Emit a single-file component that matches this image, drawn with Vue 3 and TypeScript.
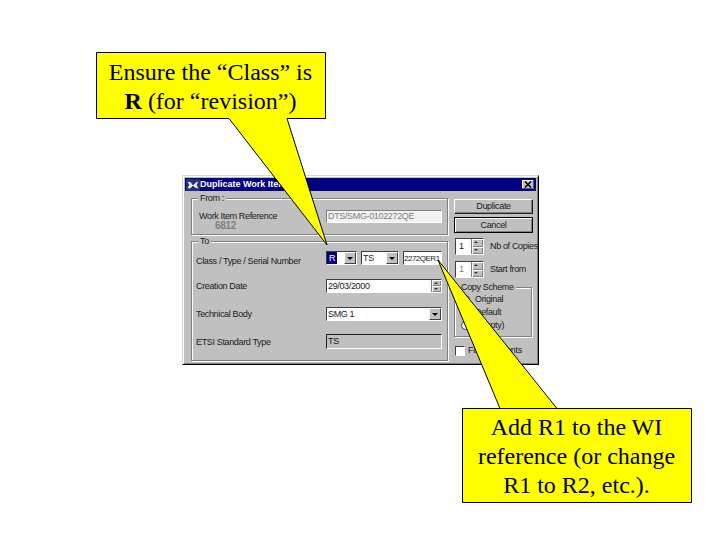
<script setup lang="ts">
const rows = [
  { label: 'Creation Date', kind: 'date', value: '29/03/2000' },
  { label: 'Technical Body', kind: 'combo', value: 'SMG 1' },
  { label: 'ETSI  Standard Type', kind: 'readonly', value: 'TS' },
]
const schemes = ['Original', 'Default', '(Empty)']
</script>

<template>
  <div class="slide">
    <section class="dialog">
      <header class="titlebar">
        <svg class="app-icon" viewBox="0 0 14 12" width="14" height="12">
          <rect width="14" height="12" fill="#20308a" />
          <path d="M1 2l4 1 2 3 3-3 3-1-2 4 2 4-4-1-2-2-3 3-3-1 2-3z" fill="#e8e8e8" stroke="#222" stroke-width=".6" />
        </svg>
        <span class="title">Duplicate Work Item</span>
        <span class="close">
          <svg viewBox="0 0 12 9" width="12" height="9"><path d="M3 1.5l6 6M9 1.5l-6 6" stroke="#000" stroke-width="1.5" /></svg>
        </span>
      </header>

      <div class="body">
        <div class="left">
          <div class="group from">
            <span class="legend">From :</span>
            <div class="ref-label">
              <span>Work Item Reference</span>
              <strong>6812</strong>
            </div>
            <div class="field disabled">DTS/SMG-0102272QE</div>
          </div>

          <div class="group to">
            <span class="legend">To</span>
            <div class="form">
              <span class="label low">Class / Type / Serial Number</span>
              <div class="triple">
                <div class="field combo class-box">
                  <span class="selected">R</span><i class="drop small"></i>
                </div>
                <div class="field combo type-box">
                  <span>TS</span><i class="drop small"></i>
                </div>
                <div class="field serial">2272QER1</div>
              </div>
              <template v-for="row in rows" :key="row.label">
                <span class="label">{{ row.label }}</span>
                <div class="field" :class="row.kind">
                  <span class="grow">{{ row.value }}</span>
                  <i v-if="row.kind === 'combo'" class="drop"></i>
                  <span v-if="row.kind === 'date'" class="spin"><i></i><i></i></span>
                </div>
              </template>
            </div>
          </div>
        </div>

        <aside class="right">
          <button class="btn" type="button">Duplicate</button>
          <button class="btn default" type="button">Cancel</button>

          <div class="spin-row first">
            <div class="field spinbox"><span class="grow">1</span><span class="spin"><i></i><i></i></span></div>
            <span>Nb of Copies</span>
          </div>
          <div class="spin-row second">
            <div class="field spinbox"><span class="grow muted">1</span><span class="spin"><i></i><i></i></span></div>
            <span>Start from</span>
          </div>

          <div class="group scheme">
            <span class="legend">Copy Scheme</span>
            <div v-for="s in schemes" :key="s" class="radio-row">
              <i class="radio"></i><span>{{ s }}</span>
            </div>
          </div>

          <div class="check-row"><i class="check"></i><span>Fix Comments</span></div>
        </aside>
      </div>
    </section>

    <svg class="callouts" viewBox="0 0 720 540" width="720" height="540">
      <polygon points="96.5,52.5 325.5,52.5 325.5,118.5 287,118.5 327,245 229,118.5 96.5,118.5" />
      <polygon points="462.5,408.5 691.5,408.5 691.5,502.5 462.5,502.5 462.5,408.5 500,408.5 438,260 557,408.5" />
    </svg>

    <p class="note note-a">Ensure the “Class” is<br /><b>R</b> (for “revision”)</p>
    <p class="note note-b">Add R1 to the WI<br />reference (or change<br />R1 to R2, etc.).</p>
  </div>
</template>

<style>
html, body { margin: 0; background: #fff; }
</style>

<style scoped>
.slide {
  position: relative;
  width: 720px;
  height: 540px;
  overflow: hidden;
  background: #fff;
}
.dialog {
  position: absolute;
  left: 182px;
  top: 175px;
  width: 357px;
  height: 190px;
  box-sizing: border-box;
  padding: 2px;
  background: #c0c0c0;
  border-top: 1px solid #d8d8d8;
  border-left: 1px solid #d8d8d8;
  border-right: 1px solid #000;
  border-bottom: 1px solid #000;
  box-shadow: inset 1px 1px 0 #fff, inset -1px -1px 0 #808080;
  font: 9px/11px "Liberation Sans", Arial, sans-serif;
  letter-spacing: -.35px;
  color: #1a1a1a;
  display: flex;
  flex-direction: column;
}
.titlebar {
  height: 13px;
  flex: none;
  display: flex;
  align-items: center;
  background: #000080;
  color: #fff;
  font-weight: bold;
}
.app-icon { margin-left: 1px; flex: none; }
.title { flex: 1; font-size: 9px; letter-spacing: 0; }
.close {
  width: 12px;
  height: 9px;
  margin-right: 2px;
  background: #c0c0c0;
  display: flex;
  box-shadow: inset -1px -1px 0 #555, inset 1px 1px 0 #fff;
}
.body {
  flex: 1;
  display: flex;
  gap: 6px;
  padding: 7px 0 0 6px;
}
.left { width: 257px; display: flex; flex-direction: column; gap: 6px; }
.right { width: 79px; display: flex; flex-direction: column; padding-top: 1px; }

.group {
  position: relative;
  box-sizing: border-box;
  border: 1px solid #808080;
  box-shadow: 1px 1px 0 #fff, inset 1px 1px 0 #fff;
}
.legend {
  position: absolute;
  left: 6px;
  top: -6px;
  padding: 0 2px;
  background: #c0c0c0;
}
.from {
  height: 37px;
  display: flex;
  justify-content: space-between;
  padding: 10px 5px 0 7px;
}
.ref-label { display: flex; flex-direction: column; padding-top: 2px; }
.ref-label strong { margin: -2px 0 0 16px; color: #808080; font-size: 10px; }
.to { height: 120px; padding: 9px 5px 0 4px; }
.form {
  display: grid;
  grid-template-columns: 130px 116px;
  grid-auto-rows: 14px;
  row-gap: 14px;
  align-items: center;
}
.low { margin-top: 6px; }
.field {
  box-sizing: border-box;
  height: 14px;
  display: flex;
  align-items: center;
  padding-left: 1px;
  background: #fff;
  border: 1px solid;
  border-color: #404040 #fff #fff #404040;
  white-space: nowrap;
  overflow: hidden;
}
.disabled {
  width: 116px;
  height: 13px;
  margin-top: 1px;
  color: #808080;
  background: #f2f2f2;
  border-color: #808080 #fff #fff #808080;
}
.readonly { background: #c0c0c0; height: 15px; margin-top: -1px; border-color: #222 #fff #fff #222; }
.grow { flex: 1; }
.triple { display: flex; gap: 4px; }
.class-box { width: 31px; padding-left: 0; }
.type-box { width: 38px; }
.serial { flex: 1; padding-left: 0; font-size: 8px; letter-spacing: -.5px; }
.combo { justify-content: space-between; }
.selected {
  background: #000080;
  color: #fff;
  padding: 0 2px;
  line-height: 12px;
}
.drop {
  position: relative;
  width: 12px;
  height: 12px;
  flex: none;
  box-sizing: border-box;
  background: #c0c0c0;
  border: 1px solid;
  border-color: #fff #404040 #404040 #fff;
}
.drop::after {
  content: "";
  position: absolute;
  left: 2px;
  top: 4px;
  border: 3px solid transparent;
  border-top-color: #000;
  border-bottom: 0;
}
.spin {
  width: 9px;
  align-self: stretch;
  display: flex;
  flex-direction: column;
  flex: none;
  background: #c0c0c0;
  border-left: 1px solid #808080;
}
.spin i {
  position: relative;
  flex: 1;
  box-shadow: inset 1px 1px 0 #fff, inset -1px -1px 0 #808080;
}
.spin i::after {
  content: "";
  position: absolute;
  left: 2px;
  top: 2px;
  border: 2px solid transparent;
  border-top: 0;
  border-bottom-color: #333;
}
.spin i + i::after {
  border-bottom: 0;
  border-top: 2px solid #333;
}
.btn {
  box-sizing: border-box;
  width: 79px;
  height: 15px;
  padding: 0;
  font: inherit;
  letter-spacing: inherit;
  color: inherit;
  background: #c0c0c0;
  border: 1px solid;
  border-color: #fff #222 #222 #fff;
  box-shadow: inset -1px -1px 0 #808080;
}
.default {
  height: 16px;
  margin-top: 3px;
  border: 1px solid #000;
  box-shadow: inset 1px 1px 0 #fff, inset -1px -1px 0 #808080;
}
.spin-row { display: flex; align-items: center; gap: 6px; white-space: nowrap; margin-left: 1px; }
.spin-row.first { margin-top: 5px; }
.spin-row.second { margin-top: 6px; }
.spinbox { width: 29px; height: 17px; flex: none; padding-left: 3px; }
.spinbox .spin { width: 11px; }
.muted { color: #808080; }
.scheme {
  width: 78px;
  height: 50px;
  margin-top: 9px;
  padding: 6px 0 0 5px;
  display: flex;
  flex-direction: column;
  gap: 2px;
}
.scheme .legend { left: 4px; }
.radio-row { display: flex; align-items: center; gap: 5px; height: 11px; }
.radio {
  width: 9px;
  height: 9px;
  box-sizing: border-box;
  margin-left: 1px;
  border-radius: 50%;
  background: #fff;
  border: 1px solid #404040;
}
.check-row { display: flex; align-items: center; gap: 3px; margin: 8px 0 0 1px; white-space: nowrap; }
.check {
  width: 10px;
  height: 10px;
  flex: none;
  box-sizing: border-box;
  background: #fff;
  border: 1px solid;
  border-color: #404040 #fff #fff #404040;
}

.callouts { position: absolute; left: 0; top: 0; }
.callouts polygon { fill: #ffff00; stroke: #000; stroke-width: 1; }
.note {
  position: absolute;
  margin: 0;
  width: 229px;
  text-align: center;
  font: 24px/29px "Liberation Serif", "Times New Roman", serif;
  color: #000;
}
.note-a { left: 96px; top: 58px; }
.note-b { left: 462px; top: 413px; }
</style>
